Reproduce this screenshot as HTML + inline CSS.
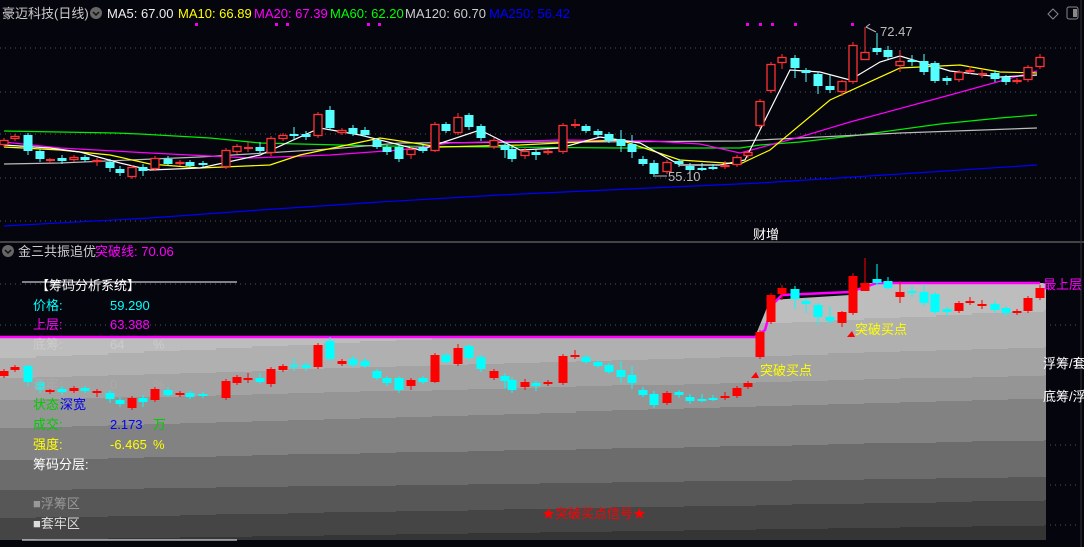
<!DOCTYPE html>
<html><head><meta charset="utf-8"><style>
html,body{margin:0;padding:0;background:#05050d;width:1084px;height:547px;overflow:hidden}
svg{display:block}
text{font-family:"Liberation Sans","Noto Sans CJK SC",sans-serif;font-size:13px}
</style></head><body>
<svg id="s" width="1084" height="547" xmlns="http://www.w3.org/2000/svg">
<defs><clipPath id="cp"><path d="M0 337H755L770 300L850 295L870 283H1046V540H0Z"/></clipPath></defs>
<rect width="1084" height="547" fill="#05050d"/>
<g stroke="#555" stroke-dasharray="1 4" stroke-width="1">
<line x1="0" y1="48" x2="1080" y2="48"/><line x1="0" y1="92" x2="1080" y2="92"/><line x1="0" y1="134" x2="1080" y2="134"/><line x1="0" y1="178" x2="1080" y2="178"/><line x1="0" y1="221" x2="1080" y2="221"/>
<line x1="0" y1="284" x2="1080" y2="284"/><line x1="0" y1="325" x2="1080" y2="325"/><line x1="0" y1="445" x2="1080" y2="445"/><line x1="0" y1="485" x2="1080" y2="485"/><line x1="0" y1="525" x2="1080" y2="525"/>
</g>
<line x1="0" y1="242" x2="1084" y2="242" stroke="#444" stroke-width="2"/>
<line x1="1081" y1="0" x2="1081" y2="547" stroke="#333"/>
<g id="bands" clip-path="url(#cp)"></g>
<g id="lines" fill="none" stroke-width="1.2"></g>
<g id="c"></g>
<circle cx="96" cy="13" r="6" fill="#666"/><path d="M93 12l3 3 3-3" stroke="#111" fill="none" stroke-width="1.5"/>
<text x="2" y="18" fill="#ccc" font-size="12.5">豪迈科技(日线)</text>
<text x="107" y="18" fill="#eee">MA5: 67.00</text>
<text x="178" y="18" fill="#ff0">MA10: 66.89</text>
<text x="254" y="18" fill="#f0f">MA20: 67.39</text>
<text x="330" y="18" fill="#0f0">MA60: 62.20</text>
<text x="405" y="18" fill="#ccc">MA120: 60.70</text>
<text x="489" y="18" fill="#00f">MA250: 56.42</text>
<g fill="#e0e">
<rect x="195" y="23" width="3" height="3"/><rect x="275" y="23" width="3" height="3"/><rect x="286" y="23" width="3" height="3"/><rect x="367" y="23" width="3" height="3"/><rect x="378" y="23" width="3" height="3"/>
<rect x="746" y="23" width="3" height="3"/><rect x="759" y="23" width="3" height="3"/><rect x="771" y="23" width="3" height="3"/><rect x="794" y="23" width="3" height="3"/><rect x="851" y="23" width="3" height="3"/>
</g>
<path d="M1053 9l5 5-5 5-5-5z" stroke="#888" fill="none"/>
<rect x="1067" y="7" width="11" height="12" rx="2" stroke="#888" fill="none"/><rect x="1073" y="9" width="4" height="8" fill="#888"/>
<text x="880" y="36" fill="#bbb" font-size="14">72.47</text>
<path d="M866 27l4 -3M866 27l10 5" stroke="#bbb" fill="none"/>
<text x="668" y="181" fill="#bbb" font-size="14">55.10</text>
<path d="M655 176h12" stroke="#bbb"/>
<text x="753" y="239" fill="#fff">财增</text>
<circle cx="8" cy="251" r="6" fill="#666"/><path d="M5 250l3 3 3-3" stroke="#111" fill="none" stroke-width="1.5"/>
<text x="18" y="256" fill="#ccc" font-size="12">金三共振追优</text>
<text x="95" y="256" fill="#f0f">突破线: 70.06</text>
<g id="txt">
<line x1="22" y1="282" x2="237" y2="282" stroke="#fff"/>
<line x1="22" y1="540" x2="237" y2="540" stroke="#fff"/>
<text x="36" y="290" fill="#fff">【筹码分析系统】</text>
<text x="33" y="310" fill="#0ff">价格:</text><text x="110" y="310" fill="#0ff">59.290</text>
<text x="33" y="329" fill="#f0f">上层:</text><text x="110" y="329" fill="#f0f">63.388</text>
<text x="33" y="349" fill="#ccc">底筹:</text><text x="110" y="349" fill="#ccc">64</text><text x="153" y="349" fill="#ccc">%</text>
<text x="33" y="389" fill="#aaa">套牢:</text><text x="110" y="389" fill="#aaa">0</text><text x="153" y="389" fill="#aaa">%</text>
<text x="33" y="409" fill="#0c0">状态:</text><text x="60" y="409" fill="#00e">深宽</text>
<text x="33" y="429" fill="#0c0">成交:</text><text x="110" y="429" fill="#00f">2.173</text><text x="153" y="429" fill="#0c0">万</text>
<text x="33" y="449" fill="#ff0">强度:</text><text x="110" y="449" fill="#ff0">-6.465</text><text x="153" y="449" fill="#ff0">%</text>
<text x="33" y="469" fill="#fff">筹码分层:</text>
<text x="33" y="508" fill="#999">■浮筹区</text>
<text x="33" y="528" fill="#ddd">■套牢区</text>
<text x="542" y="518" fill="#f00">★突破买点信号★</text>
<text x="760" y="375" fill="#ff0">突破买点</text>
<text x="855" y="334" fill="#ff0">突破买点</text>
<path d="M751 378l5-6 3 6z M847 337l5-6 3 6z" fill="#f00"/>
<text x="1043" y="289" fill="#f0f">最上层</text>
<text x="1043" y="368" fill="#fff">浮筹/套</text>
<text x="1043" y="401" fill="#fff">底筹/浮</text>
</g>
</svg>
<script>
var NS="http://www.w3.org/2000/svg";
function el(p,t,a){var e=document.createElementNS(NS,t);for(var k in a)e.setAttribute(k,a[k]);p.appendChild(e);return e;}
var B=document.getElementById('bands');
el(B,'rect',{x:0,y:270,width:1046,height:280,fill:"#bdbdbd"});
var bands=[["#b0b0b0",358,310],["#a3a3a3",378,347],["#959595",400,375],["#828282",428,398],["#6c6c6c",460,440],["#575757",490,477],["#454545",518,500],["#353535",540,525]];
bands.forEach(function(b){
 var d="M0 "+b[1];for(var x=0;x<1046;x+=36){var t=x/1046;var y=Math.round(b[1]+(b[2]-b[1])*t);d+="L"+x+" "+y+"L"+Math.min(x+36,1046)+" "+y;}
 d+="L1046 540L0 540Z";
 el(B,'path',{d:d,fill:b[0]});
});
var L=document.getElementById('lines');
function pl(pts,c,w){el(L,'polyline',{points:pts,stroke:c,'stroke-width':w||1.2});}
pl("0,337 755,337 765,330 772,305 782,295 850,292 877,283 1040,283","#f0f",2.5);
pl("4,131 115,133 140,134 210,138 260,143 380,146 500,147 620,148 740,148 760,145 800,142 860,135 940,124 1000,118 1037,115","#0e0");
pl("4,164 60,163 200,157 330,149 400,143 740,141 800,138 900,133 1037,128","#bbb");
pl("4,226 150,218 260,210 380,202 500,195 650,188 760,183 900,174 1037,165","#00f");
pl("4,142 60,148 150,153 250,158 330,155 400,150 450,143 560,140 650,141 700,144 740,153 800,137 850,122 950,95 1037,71","#f0f");
pl("4,147 60,150 110,155 150,164 200,168 270,165 300,155 380,138 440,147 520,145 620,140 680,160 740,164 770,150 830,100 900,68 960,65 1000,72 1037,73","#ff0");
pl("4,145 50,148 80,152 120,163 150,170 200,168 260,155 320,128 360,135 420,150 480,130 520,150 560,148 600,137 640,143 680,165 720,165 745,160 770,110 790,70 820,72 850,80 880,62 900,56 950,71 1000,77 1037,75","#fff");
var C=[[4,140,145,'r'],[15,136,139,'r'],[28,135,151,'c',133,155],[40,151,159,'c',149,162],[50,159,159,'r',158,163],[62,158,161,'c',155,164],[74,157,160,'r'],[85,157,160,'c',155,162],[97,160,162,'r',158,166],[110,162,168,'c',159,172],[120,169,173,'c',166,176],[132,167,177,'r'],[143,167,171,'c',164,176],[155,158,169,'r'],[168,159,164,'c',156,166],[180,162,164,'r'],[190,162,166,'c'],[203,163,165,'c'],[226,150,167,'r'],[237,146,152,'r'],[248,147,147,'r',142,152],[260,147,151,'c',142,153],[271,138,153,'r',136,156],[283,135,139,'r'],[294,134,136,'c',127,140],[306,134,137,'c',131,140],[318,114,136,'r',112,138],[330,110,128,'c',106,130],[342,130,133,'r'],[353,128,134,'c',125,136],[365,130,135,'c',127,137],[377,140,147,'c'],[387,147,152,'c',145,155],[399,147,159,'c',145,162],[411,149,155,'r',147,159],[423,147,151,'c',145,153],[435,124,151,'r',122,152],[446,124,131,'c',122,133],[458,117,133,'r',113,135],[469,115,127,'c',113,130],[481,126,138,'c',124,141],[494,140,147,'r'],[505,145,150,'c',142,158],[512,149,159,'c',146,162],[525,151,156,'r',148,159],[536,152,155,'c',150,160],[548,151,153,'r'],[563,125,152,'r',123,154],[575,124,124,'r',119,128],[586,126,131,'c',124,133],[598,131,135,'c',129,137],[609,134,141,'c',132,143],[621,139,146,'c',130,152],[632,144,152,'c',135,158],[643,159,164,'c',156,166],[654,163,174,'c',160,177],[667,162,172,'r'],[679,161,164,'c',159,167],[690,166,170,'c',163,173],[702,168,168,'c',163,171],[713,167,167,'c',164,170],[725,165,167,'r',161,169],[737,157,165,'r',155,167],[748,152,156,'r',150,158],[760,101,126,'r'],[771,64,91,'r'],[782,57,63,'r',54,69],[795,58,68,'c',55,78],[806,70,73,'c',68,82],[818,74,86,'c',72,94],[830,86,90,'c',75,93],[842,81,92,'r',80,96],[853,45,82,'r',42,84],[865,52,60,'r',27,60],[877,48,52,'c',33,55],[888,50,57,'c',46,59],[900,61,66,'r',50,72],[912,60,60,'c',55,66],[924,61,72,'c',54,75],[935,63,81,'c',61,83],[947,78,81,'c',76,85],[959,72,80,'r'],[970,70,72,'r',66,74],[982,73,73,'r',69,78],[995,73,79,'c',70,82],[1006,77,82,'c',75,85],[1017,80,82,'r',78,84],[1028,67,80,'r'],[1040,57,67,'r',54,69]];
var G=document.getElementById('c');
function draw(off,filled){
 C.forEach(function(k){
  var x=k[0],t=k[1]+off,b=k[2]+off,red=k[3]=='r';
  var col=red?(filled?"#f00":"#f33"):(filled?"#0ff":"#5ff");
  var wt=(k[4]!==undefined?k[4]:k[1]-2)+off,wb=(k[5]!==undefined?k[5]:k[2]+2)+off;
  el(G,'line',{x1:x,y1:wt,x2:x,y2:wb,stroke:col,'stroke-width':1});
  var h=Math.max(b-t,1);
  if(red&&!filled){ if(h<=1) el(G,'rect',{x:x-4,y:t,width:9,height:2,fill:col}); else el(G,'rect',{x:x-4,y:t+0.5,width:8,height:h-1,fill:"#05050d",stroke:col,'stroke-width':1.3});}
  else el(G,'rect',{x:x-4.5,y:t,width:9,height:h<=1?2:h,fill:col});
 });
}
draw(0,false);
draw(231,true);
</script>
</body></html>
